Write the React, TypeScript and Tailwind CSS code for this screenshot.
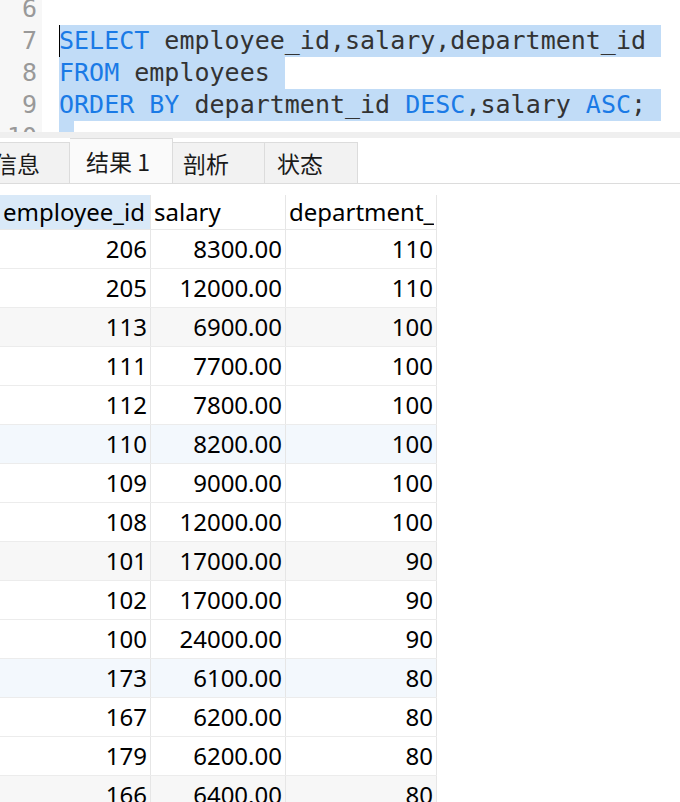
const rows: [string, string, string][] = [
  ["206", "8300.00", "110"],
  ["205", "12000.00", "110"],
  ["113", "6900.00", "100"],
  ["111", "7700.00", "100"],
  ["112", "7800.00", "100"],
  ["110", "8200.00", "100"],
  ["109", "9000.00", "100"],
  ["108", "12000.00", "100"],
  ["101", "17000.00", "90"],
  ["102", "17000.00", "90"],
  ["100", "24000.00", "90"],
  ["173", "6100.00", "80"],
  ["167", "6200.00", "80"],
  ["179", "6200.00", "80"],
  ["166", "6400.00", "80"],
];

function rowBg(i: number) {
  if (i % 6 === 2) return "bg-[#f7f7f7]";
  if (i % 6 === 5) return "bg-[#f3f8fd]";
  return "bg-white";
}

const kw = "text-[#1a7ae6]";

export default function App() {
  return (
    <div className="w-[680px] h-[802px] overflow-hidden bg-white">
      {/* Editor */}
      <div className="h-[132px] overflow-hidden flex font-[family-name:'DejaVu_Sans_Mono',monospace] text-[25px]">
        <div className="w-[42px] shrink-0 bg-[#f7f7f7] text-[#999] -mt-[7px]">
          {[6, 7, 8, 9, 10].map((n) => (
            <div key={n} className="h-[32px] leading-[32px] text-right pr-[5px]">
              {n}
            </div>
          ))}
        </div>
        <div className="pl-[17px] -mt-[7px] text-[#333] whitespace-pre">
          <div className="h-[32px]" />
          <div className="h-[32px] leading-[32px] relative">
            <span className="inline-block h-[32px] bg-[#c1dcf7] pr-[15px]">
              <span className={kw}>SELECT</span> employee_id,salary,department_id
            </span>
            <span className="absolute left-0 top-0 w-px h-[32px] bg-black" />
          </div>
          <div className="h-[32px] leading-[32px]">
            <span className="inline-block h-[32px] bg-[#c1dcf7] pr-[15px]">
              <span className={kw}>FROM</span> employees
            </span>
          </div>
          <div className="h-[32px] leading-[32px]">
            <span className="inline-block h-[32px] bg-[#c1dcf7] pr-[15px]">
              <span className={kw}>ORDER BY</span> department_id <span className={kw}>DESC</span>,salary{" "}
              <span className={kw}>ASC</span>;
            </span>
          </div>
          <div className="h-[32px]">
            <div className="w-[15px] h-[32px] bg-[#c1dcf7]" />
          </div>
        </div>
      </div>
      <div className="h-[6px] bg-[#efefef]" />

      {/* Tabs */}
      <div className="h-[46px] flex items-end border-b border-[#dcdcdc] font-[family-name:'Noto_Sans_CJK_SC',sans-serif] text-[23px] text-[#1a1a1a]">
        <div className="-ml-[20px] w-[90px] h-[41px] flex items-center pl-[14px] bg-[#f2f2f2] border-t border-r border-[#dcdcdc]">
          信息
        </div>
        <div className="w-[103px] h-[45px] flex items-center pl-[16px] bg-[#fafafa] border-t border-r border-[#dcdcdc]">
          结果 1
        </div>
        <div className="w-[92px] h-[41px] flex items-center pl-[10px] bg-[#f2f2f2] border-t border-r border-[#dcdcdc]">
          剖析
        </div>
        <div className="w-[93px] h-[41px] flex items-center pl-[12px] bg-[#f2f2f2] border-t border-r border-[#dcdcdc]">
          状态
        </div>
      </div>

      {/* Grid */}
      <div className="mt-[11px] w-[437px] font-['Noto_Sans',sans-serif] text-[24px] text-black">
        <div className="flex h-[35px] border-b border-[#e8e8e8] leading-[34px]">
          <div className="w-[151px] pl-[3px] bg-[#d9e9f8] border-r border-[#e6e6e6] whitespace-nowrap overflow-hidden">
            employee_id
          </div>
          <div className="w-[135px] pl-[3px] border-r border-[#e6e6e6]">salary</div>
          <div className="w-[151px] pl-[3px] border-r border-[#e6e6e6] whitespace-nowrap overflow-hidden">
            <div className="w-[145px] overflow-hidden">department_</div>
          </div>
        </div>
        {rows.map((r, i) => (
          <div key={i} className={`flex h-[39px] border-b border-[#ececec] leading-[38px] ${rowBg(i)}`}>
            <div className="w-[151px] pr-[3px] text-right border-r border-[#e6e6e6]">{r[0]}</div>
            <div className="w-[135px] pr-[3px] text-right border-r border-[#e6e6e6]">{r[1]}</div>
            <div className="w-[151px] pr-[3px] text-right border-r border-[#e6e6e6]">{r[2]}</div>
          </div>
        ))}
      </div>
    </div>
  );
}
